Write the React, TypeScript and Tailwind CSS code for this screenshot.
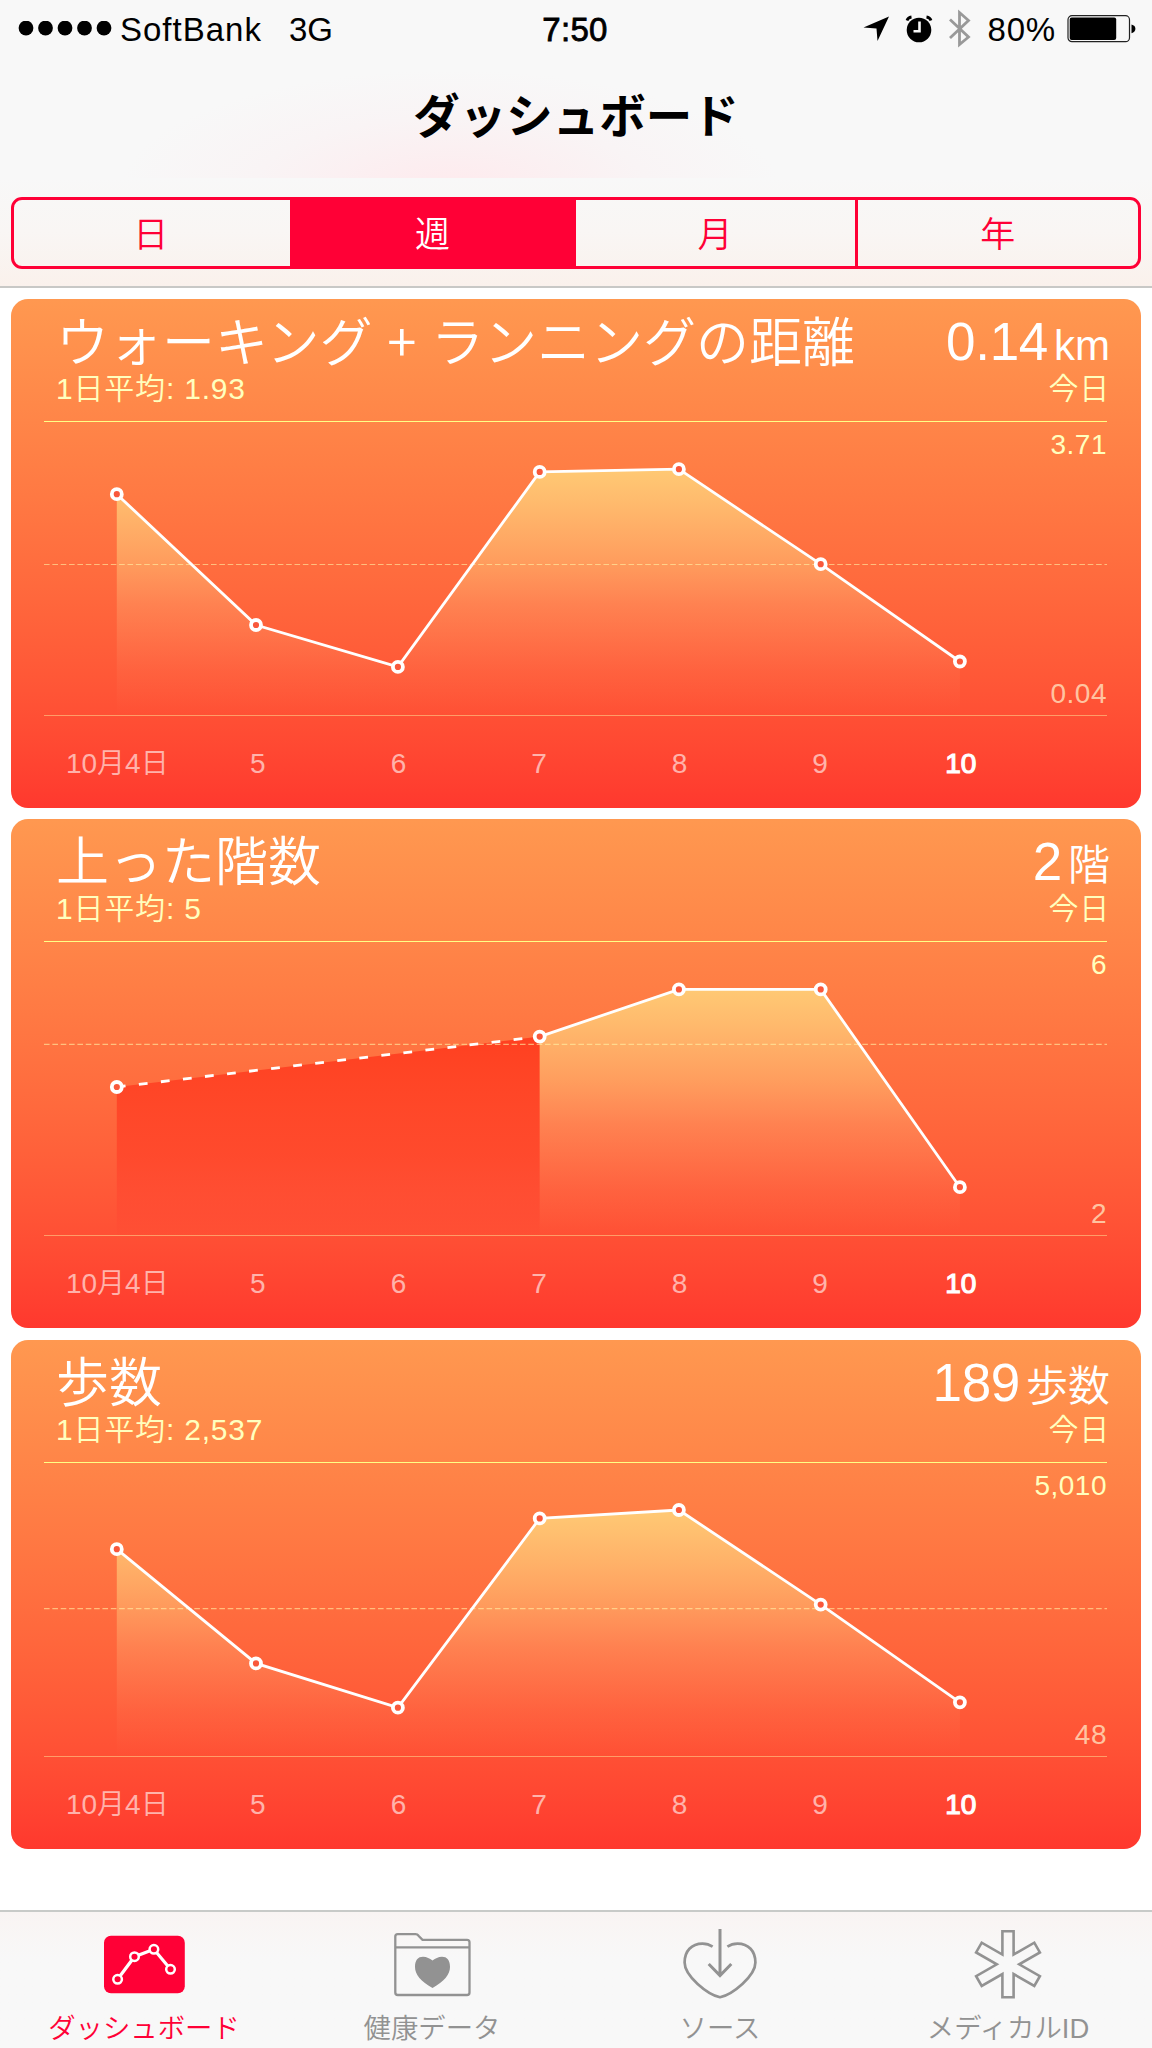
import { useState } from "react";

const PERIODS = [
  { label: "日", width: "w-[275.5px] pr-[2px]" },
  { label: "週", width: "w-[286px]" },
  { label: "月", width: "w-[279px]" },
  { label: "年", width: "flex-1" },
];

const DAYS = ["10月4日", "5", "6", "7", "8", "9", "10"];

type Point = { x: number; y: number };

type Metric = {
  id: string;
  title: string[];
  average: string;
  value: string;
  unit: string;
  max: string;
  min: string;
  averageY: number;
  missing: Point[];
  points: Point[];
};

const METRICS: Metric[] = [
  {
    id: "distance",
    title: ["ウォーキング", "ランニングの距離"],
    average: "1.93",
    value: "0.14",
    unit: "km",
    max: "3.71",
    min: "0.04",
    averageY: 143.5,
    missing: [],
    points: [
      { x: 72.8, y: 73.2 },
      { x: 212, y: 204 },
      { x: 353.9, y: 245.9 },
      { x: 495.7, y: 50.9 },
      { x: 634.9, y: 48.2 },
      { x: 776.7, y: 143.2 },
      { x: 915.9, y: 240.5 },
    ],
  },
  {
    id: "floors",
    title: ["上った階数"],
    average: "5",
    value: "2",
    unit: "階",
    max: "6",
    min: "2",
    averageY: 103.3,
    missing: [
      { x: 72.8, y: 146 },
      { x: 495.7, y: 95.6 },
    ],
    points: [
      { x: 495.7, y: 95.6 },
      { x: 634.9, y: 48.4 },
      { x: 776.7, y: 48.4 },
      { x: 915.9, y: 246.2 },
    ],
  },
  {
    id: "steps",
    title: ["歩数"],
    average: "2,537",
    value: "189",
    unit: "歩数",
    max: "5,010",
    min: "48",
    averageY: 146.7,
    missing: [],
    points: [
      { x: 72.8, y: 87.2 },
      { x: 212, y: 201.4 },
      { x: 353.9, y: 245.7 },
      { x: 495.7, y: 56.4 },
      { x: 634.9, y: 48 },
      { x: 776.7, y: 142.6 },
      { x: 915.9, y: 240.3 },
    ],
  },
];

const toLine = (points: Point[]) => points.map((p) => `${p.x},${p.y}`).join(" ");

const toArea = (points: Point[]) =>
  `${points[0].x},294 ${toLine(points)} ${points[points.length - 1].x},294`;

function StatusBar() {
  return (
    <div className="flex h-[58px] items-center text-[33px] leading-none">
      <div className="flex flex-1 items-center pl-[18px]">
        <svg width="98" height="16" viewBox="0 0 98 16">
          {[8, 27.5, 47, 66.5, 86].map((cx) => (
            <circle key={cx} cx={cx} cy="7" r="7.4" />
          ))}
        </svg>
        <span className="ml-[4px] tracking-[1px]">SoftBank</span>
        <span className="ml-[27px]">3G</span>
      </div>
      <span className="pr-[5px] tracking-[0.3px] [-webkit-text-stroke:0.8px_black]">7:50</span>
      <div className="flex flex-1 items-center justify-end pr-[15px]">
        <svg width="28" height="26" viewBox="0 0 28 26">
          <path d="M26 0.5 L0.5 11.5 L13.5 12.5 L14.5 25 Z" />
        </svg>
        <svg className="ml-[14px]" width="28" height="28" viewBox="0 0 28 28">
          <circle cx="14" cy="15" r="12.3" />
          <path d="M2 5.5 Q3 2.5 6.5 2 M26 5.5 Q25 2.5 21.5 2" fill="none" stroke="#000" strokeWidth="2.8" />
          <path d="M14.5 6.5 V16.3 H8.5" fill="none" stroke="#f8f8f8" strokeWidth="2.6" />
        </svg>
        <svg className="ml-[15px]" width="24" height="40" viewBox="0 0 24 40">
          <path
            d="M2 10.5 L20.5 28 L11.5 35.5 V3.5 L20.5 11.5 L2 29"
            fill="none"
            stroke="#999"
            strokeWidth="2.8"
          />
        </svg>
        <span className="ml-[16px] tracking-[0.8px]">80%</span>
        <svg className="ml-[11px]" width="70" height="28" viewBox="0 0 70 28">
          <rect x="1" y="0.7" width="61.5" height="26" rx="4" fill="none" stroke="#222" strokeWidth="1.2" />
          <rect x="2.7" y="2.4" width="46.5" height="22.6" rx="2" />
          <path d="M64.5 9.5 Q68.4 10.5 68.4 13.8 Q68.4 17.2 64.5 18.2 Z" />
        </svg>
      </div>
    </div>
  );
}

function PeriodTabs() {
  const [active, setActive] = useState("週");

  return (
    <div className="flex h-[72px] w-[1130px] overflow-hidden rounded-[11px] border-[3px] border-[#ff0036]">
      {PERIODS.map(({ label, width }) => (
        <button
          key={label}
          type="button"
          onClick={() => setActive(label)}
          className={`${width} pt-[2px] text-[35px] leading-none font-[350] ${
            active === label ? "bg-[#ff0036] text-white" : "text-[#ff0036]"
          } ${label === "年" ? "border-l-[3px] border-[#ff0036]" : ""}`}
        >
          {label}
        </button>
      ))}
    </div>
  );
}

function Chart({ metric }: { metric: Metric }) {
  const { id, points, missing, averageY } = metric;
  const markers = missing.length ? [missing[0], ...points] : points;

  return (
    <svg className="absolute -top-px left-0" width="1063" height="295" viewBox="0 0 1063 295">
      <defs>
        <linearGradient id={`${id}-area`} gradientUnits="userSpaceOnUse" x1="0" y1="48" x2="0" y2="294">
          <stop offset="0" stopColor="#ffc974" />
          <stop offset="0.39" stopColor="#ffc578" stopOpacity="0.52" />
          <stop offset="0.55" stopColor="#ffc080" stopOpacity="0.31" />
          <stop offset="0.82" stopColor="#ffb080" stopOpacity="0.1" />
          <stop offset="1" stopColor="#ffb080" stopOpacity="0" />
        </linearGradient>
        <linearGradient id={`${id}-missing`} gradientUnits="userSpaceOnUse" x1="0" y1="95" x2="0" y2="294">
          <stop offset="0" stopColor="#ff4020" />
          <stop offset="0.6" stopColor="#ff4228" stopOpacity="0.75" />
          <stop offset="0.9" stopColor="#ff4430" stopOpacity="0.4" />
          <stop offset="1" stopColor="#ff4430" stopOpacity="0.1" />
        </linearGradient>
      </defs>
      {missing.length > 0 && <polygon points={toArea(missing)} fill={`url(#${id}-missing)`} />}
      <polygon points={toArea(points)} fill={`url(#${id}-area)`} />
      <line
        x1="0"
        x2="1063"
        y1={averageY}
        y2={averageY}
        stroke="#fff5a8"
        strokeOpacity="0.6"
        strokeWidth="1.2"
        strokeDasharray="5.6 2.75"
      />
      {missing.length > 0 && (
        <polyline
          points={toLine(missing)}
          fill="none"
          stroke="#fff"
          strokeWidth="2.8"
          strokeDasharray="8.8 13.4"
        />
      )}
      <polyline points={toLine(points)} fill="none" stroke="#fff" strokeWidth="2.8" />
      {markers.map((p) => (
        <circle key={p.x} cx={p.x} cy={p.y} r="5" fill="#f9583b" stroke="#fff" strokeWidth="3.8" />
      ))}
    </svg>
  );
}

function MetricCard({ metric }: { metric: Metric }) {
  return (
    <section className="h-[509px] rounded-[17px] bg-linear-to-b from-[#ff9850] to-[#ff382e] px-[33px]">
      <div className="flex h-[122px] justify-between pt-[10px] pl-[12px]">
        <div>
          <h2 className="h-[60px] pt-[4px] text-[53px] leading-[60px] font-[350] text-white">
            {metric.title[0]}
            {metric.title[1] && (
              <>
                {" "}
                <span className="font-['Noto_Sans_CJK_JP'] leading-none">+</span> {metric.title[1]}
              </>
            )}
          </h2>
          <p className="text-[30px] leading-[40px] font-[350] tracking-[0.8px] text-[#ffffbe]">
            1日平均: {metric.average}
          </p>
        </div>
        <div className="-mr-[2px] text-right">
          <p className="flex h-[60px] items-baseline justify-end gap-[6px] pt-[3px] text-[53px] leading-[60px] font-[350] tracking-[-0.3px] text-white">
            {metric.value}
            <span className="text-[42px] tracking-normal">{metric.unit}</span>
          </p>
          <p className="text-[30px] leading-[40px] font-[350] tracking-[0.7px] text-[#ffffbe]">今日</p>
        </div>
      </div>

      <div className="relative h-[295px] w-[1063px] border-t border-b border-t-[#ffff86] border-b-[#ffd08a]/60">
        <Chart metric={metric} />
        <div className="flex h-full flex-col items-end justify-between pt-[8px] pb-[6px] text-[28px] leading-[30px] tracking-[0.5px]">
          <span className="text-[#ffffbe]">{metric.max}</span>
          <span className="text-[#ffe3c0]/80">{metric.min}</span>
        </div>
      </div>

      <div className="ml-[3px] grid w-[984px] grid-cols-7 pt-[28px] text-center text-[28px] leading-[40px] font-[350]">
        {DAYS.map((day) => (
          <span
            key={day}
            className={day === "10" ? "text-white [-webkit-text-stroke:1.2px_white]" : "text-white/60"}
          >
            {day}
          </span>
        ))}
      </div>
    </section>
  );
}

function DashboardIcon() {
  return (
    <svg width="84" height="72" viewBox="0 0 84 72">
      <rect x="2" y="7.7" width="80.8" height="57.6" rx="7" fill="#ff0036" />
      <path d="M15.6 51.3 L32.5 28.7 L51.9 21.3 L68.5 41.3" fill="none" stroke="#fff" strokeWidth="3.2" />
      {[
        [15.6, 51.3],
        [32.5, 28.7],
        [51.9, 21.3],
        [68.5, 41.3],
      ].map(([cx, cy]) => (
        <circle key={cx} cx={cx} cy={cy} r="4.3" fill="#ff0036" stroke="#fff" strokeWidth="2.5" />
      ))}
    </svg>
  );
}

function HealthDataIcon() {
  return (
    <svg width="84" height="72" viewBox="0 0 84 72" fill="none" stroke="#929292" strokeWidth="2.3">
      <path d="M5.3 8.5 Q5.3 6.1 7.7 6.1 H25.5 Q27.5 6.1 28.5 7.7 L32.5 11.8 H77 Q79.5 11.8 79.5 14.3 V64.4 Q79.5 67 77 67 H7.8 Q5.3 67 5.3 64.4 Z" />
      <path d="M5.3 19.3 H79.5" />
      <path
        d="M42.5 60 C31 53.5 25 46.5 25 39 C25 32 28 28.8 33 28.8 C37 28.8 39.5 30.6 42.5 32.4 C45.5 30.6 48 28.8 52 28.8 C57 28.8 60 32 60 39 C60 46.5 54 53.5 42.5 60 Z"
        fill="#929292"
        stroke="none"
      />
    </svg>
  );
}

function SourcesIcon() {
  return (
    <svg width="84" height="72" viewBox="0 0 84 72" fill="none" stroke="#929292" strokeWidth="2.7">
      <path d="M34.6 18.7 C31.5 16.5 28 15.6 24.5 15.6 C13.5 15.6 6.6 23 6.6 34.5 C6.6 48 29.5 66.5 42 69.2 C54.5 66.5 77.4 48 77.4 34.5 C77.4 23 70.5 15.6 59.5 15.6 C56 15.6 52.5 16.5 49.4 18.7" />
      <path d="M42 1 V47 M30.7 36 L42 47.5 L53.3 36" strokeWidth="3" />
    </svg>
  );
}

function MedicalIdIcon() {
  return (
    <svg width="84" height="72" viewBox="0 0 84 72" fill="none" stroke="#929292" strokeWidth="2.6">
      <path
        transform="translate(42 36.3)"
        d="M-5.6 -33 H5.6 V-9.7 L26.3 -21.6 L31.9 -11.9 L11.2 0 L31.9 11.9 L26.3 21.6 L5.6 9.7 V33 H-5.6 V9.7 L-26.3 21.6 L-31.9 11.9 L-11.2 0 L-31.9 -11.9 L-26.3 -21.6 L-5.6 -9.7 Z"
      />
    </svg>
  );
}

const TABS = [
  { label: "ダッシュボード", icon: <DashboardIcon />, active: true },
  { label: "健康データ", icon: <HealthDataIcon />, active: false },
  { label: "ソース", icon: <SourcesIcon />, active: false },
  { label: "メディカルID", icon: <MedicalIdIcon />, active: false },
];

export default function App() {
  return (
    <div className="flex h-[2048px] w-[1152px] flex-col overflow-hidden bg-white font-['Liberation_Sans','Noto_Sans_CJK_JP',sans-serif] text-black">
      {/* Header */}
      <header className="h-[288px] border-b-2 border-[#c8c8c6] bg-[#f8f8f8]">
        <div className="h-[178px] bg-[radial-gradient(ellipse_330px_120px_at_450px_190px,#feeaed,#f9f4f5_60%,#f8f8f8_100%)]">
          <StatusBar />
          <h1 className="pt-[26px] text-center text-[46.5px] leading-[66px] font-bold">ダッシュボード</h1>
        </div>
        <div className="flex h-[108px] justify-center bg-linear-to-b from-[#f8f8f8] via-[#f9f6f4] to-[#faf1ec] pt-[19px]">
          <PeriodTabs />
        </div>
      </header>

      {/* Metric cards */}
      <main className="flex flex-1 flex-col gap-[11.4px] px-[11px] pt-[11px]">
        {METRICS.map((metric) => (
          <MetricCard key={metric.id} metric={metric} />
        ))}
      </main>

      {/* Tab bar */}
      <nav className="grid h-[138px] grid-cols-4 border-t-2 border-[#c8cac8] bg-linear-to-b from-[#f9f4f3] via-[#f8f8f8] via-35% to-[#f8f8f8]">
        {TABS.map(({ label, icon, active }) => (
          <div
            key={label}
            className={`flex flex-col items-center pt-[16px] text-[27.4px] leading-[40px] font-[350] ${
              active ? "text-[#ff0036]" : "text-[#929292]"
            }`}
          >
            {icon}
            <span className="mt-[9px]">{label}</span>
          </div>
        ))}
      </nav>
    </div>
  );
}
